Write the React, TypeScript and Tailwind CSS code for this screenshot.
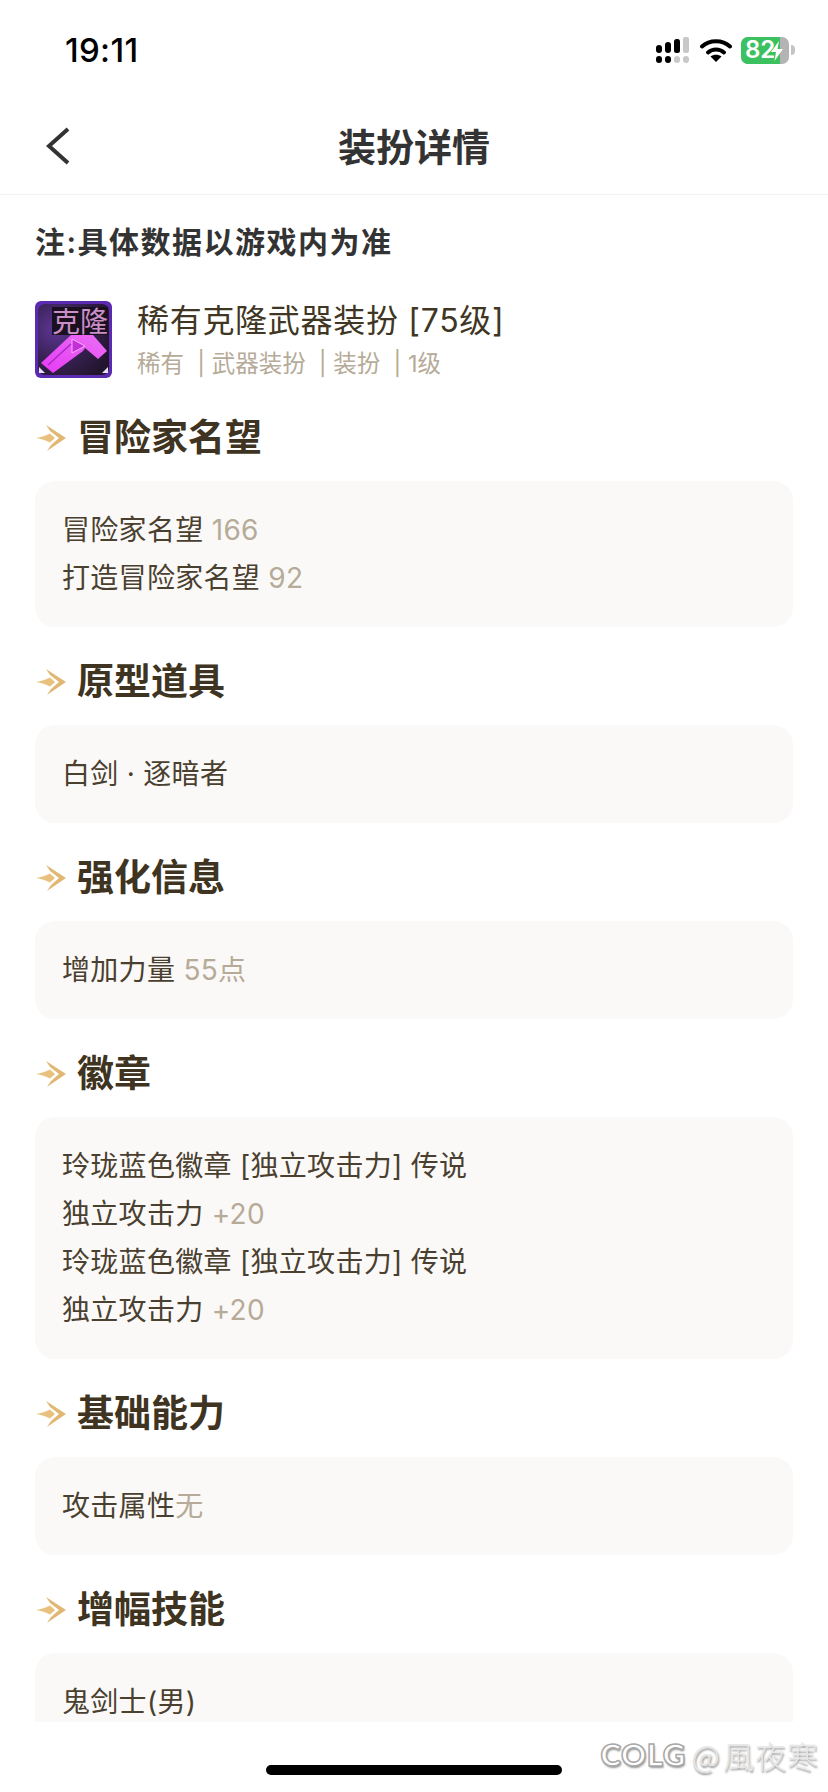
const SANS = "font-['Inter','Noto_Sans_CJK_SC',sans-serif]";

function SignalIcon() {
  return (
    <svg width="34" height="26" viewBox="0 0 34 26">
      <rect x="0" y="8" width="6" height="8" rx="3" fill="#000" />
      <rect x="9" y="5" width="6" height="11" rx="3" fill="#000" />
      <rect x="18" y="2" width="6" height="14" rx="2.5" fill="#000" />
      <rect x="27" y="0" width="6" height="16" rx="2" fill="#c8c8c8" />
      <rect x="0" y="19" width="6" height="7" rx="3" fill="#000" />
      <rect x="9" y="19" width="6" height="7" rx="3" fill="#000" />
      <rect x="18" y="19" width="6" height="7" rx="3" fill="#c8c8c8" />
      <rect x="27" y="19" width="6" height="7" rx="3" fill="#c8c8c8" />
    </svg>
  );
}

function WifiIcon() {
  return (
    <svg width="32" height="24" viewBox="0 0 32 24" fill="none">
      <path d="M2 8.5C9.5 1.5 22.5 1.5 30 8.5" stroke="#000" strokeWidth="4" strokeLinecap="round" />
      <path d="M8 14.5C12.5 10.5 19.5 10.5 24 14.5" stroke="#000" strokeWidth="4" strokeLinecap="round" />
      <path d="M16 24L10.5 18.5C13.5 16.3 18.5 16.3 21.5 18.5Z" fill="#000" />
    </svg>
  );
}

function BatteryIcon() {
  return (
    <div className="flex items-center">
      <div className="relative flex h-[27px] w-[48px] overflow-hidden rounded-[7px] bg-[#b4b4b4]">
        <div className="flex h-full w-[39px] items-center bg-[#3cc161] pl-[4px] text-[24px] leading-none font-semibold text-white">
          82
        </div>
        <svg className="absolute top-[4px] left-[30px]" width="12" height="20" viewBox="0 0 12 20">
          <path d="M8 0L0 11H5L3.500 20L12 8H6.500Z" fill="#fff" />
        </svg>
      </div>
      <div className="ml-[2px] h-[10px] w-[4px] rounded-r-full bg-[#c4c4c4]" />
    </div>
  );
}

function ItemIcon() {
  return (
    <svg width="77" height="77" viewBox="0 0 77 77" className="shrink-0">
      <defs>
        <radialGradient id="nebula" cx="0.25" cy="0.35" r="0.85">
          <stop offset="0" stopColor="#5d3796" />
          <stop offset="0.5" stopColor="#3a2257" />
          <stop offset="1" stopColor="#21142c" />
        </radialGradient>
        <linearGradient id="blade" x1="0" y1="1" x2="1" y2="0">
          <stop offset="0" stopColor="#e63af5" />
          <stop offset="1" stopColor="#ec6ef5" />
        </linearGradient>
      </defs>
      <rect width="77" height="77" rx="6" fill="#5a2bb0" />
      <rect x="3" y="3" width="71" height="71" rx="7" fill="url(#nebula)" />
      <rect x="17" y="6" width="56" height="28" fill="#1a1020" />
      <text x="17" y="31" fontSize="28" fontWeight="400" fill="#c98fc6" fontFamily="'Noto Sans CJK SC', sans-serif">
        克隆
      </text>
      <path d="M6 62L36 34L58 34L72 50L63 58L50 47L48 50L18 72Z" fill="url(#blade)" />
      <path d="M37 38L37 52L50 45Z" fill="#c22fd8" stroke="#f5b0f5" strokeWidth="1" />
      <path d="M13 64L36 43" stroke="#a92ac4" strokeWidth="1.500" />
      <path d="M4 72L10 72L4 66Z" fill="#e6e0f0" />
      <path d="M73 72L67 72L73 66Z" fill="#e6e0f0" />
    </svg>
  );
}

function SectionArrow() {
  return (
    <svg width="30" height="28" viewBox="0 0 30 28" className="shrink-0">
      <path d="M0 14C5 13 10 12 14 9.500L19 14L14 18.500C10 16 5 15 0 14Z" fill="#e8c27c" />
      <path d="M10 1L30 14L11 27L15 21L23 14L14 7Z" fill="#e0b873" />
    </svg>
  );
}

type Line = { label: string; value?: string };

const sections: { title: string; lines: Line[]; clipped?: boolean }[] = [
  {
    title: "冒险家名望",
    lines: [
      { label: "冒险家名望 ", value: "166" },
      { label: "打造冒险家名望 ", value: "92" },
    ],
  },
  { title: "原型道具", lines: [{ label: "白剑 · 逐暗者" }] },
  { title: "强化信息", lines: [{ label: "增加力量 ", value: "55点" }] },
  {
    title: "徽章",
    lines: [
      { label: "玲珑蓝色徽章 [独立攻击力] 传说" },
      { label: "独立攻击力 ", value: "+20" },
      { label: "玲珑蓝色徽章 [独立攻击力] 传说" },
      { label: "独立攻击力 ", value: "+20" },
    ],
  },
  { title: "基础能力", lines: [{ label: "攻击属性", value: "无" }] },
  { title: "增幅技能", lines: [{ label: "鬼剑士(男)" }], clipped: true },
];

export default function App() {
  return (
    <div className={`relative flex h-[1792px] w-[828px] flex-col overflow-hidden bg-white ${SANS}`}>
      {/* Status bar */}
      <div className="flex h-[100px] shrink-0 items-center justify-between pr-[33px] pl-[65px]">
        <span className="text-[33px] leading-none font-medium tracking-[0.3px] text-black">19:11</span>
        <div className="flex items-center">
          <SignalIcon />
          <div className="ml-[10px]">
            <WifiIcon />
          </div>
          <div className="ml-[9px]">
            <BatteryIcon />
          </div>
        </div>
      </div>

      {/* Header */}
      <div className="relative flex h-[95px] shrink-0 items-center justify-center border-b border-[#f3f3f3]">
        <svg className="absolute top-[27px] left-[44px]" width="28" height="38" viewBox="0 0 28 38" fill="none">
          <path d="M24 2L5 19L24 36" stroke="#333" strokeWidth="4" />
        </svg>
        <h1 className="text-[38px] leading-none font-bold text-[#333]">装扮详情</h1>
      </div>

      {/* Scrolling content */}
      <div className="h-[1527px] shrink-0 overflow-hidden px-[35px] pt-[25px]">
        <p className="text-[30px] leading-[44px] font-semibold tracking-[1.5px] text-[#333]">注:具体数据以游戏内为准</p>

        <div className="mt-[37px] flex h-[77px] items-center gap-[25px]">
          <ItemIcon />
          <div className="flex flex-col">
            <span className="text-[32px] leading-[40px] tracking-[0.7px] text-[#3f3624]">稀有克隆武器装扮 [75级]</span>
            <span className="mt-[8px] text-[23.5px] leading-[30px] text-[#b5ab98]">稀有&nbsp; | 武器装扮&nbsp; | 装扮&nbsp; | 1级</span>
          </div>
        </div>

        <div className="mt-[35px] flex flex-col gap-[30px]">
          {sections.map((section) => (
            <section key={section.title}>
              <div className="flex h-[50px] items-center gap-[11px] pl-[1px]">
                <SectionArrow />
                <h2 className="text-[37px] leading-[48px] font-bold text-[#3e3421]">{section.title}</h2>
              </div>
              <div
                className={`mt-[18px] rounded-[20px] bg-[#fbf9f7] px-[27px] py-[25px] ${section.clipped ? "min-h-[140px]" : ""}`}
              >
                {section.lines.map((line, i) => (
                  <p key={i} className="text-[28px] leading-[48px] tracking-[0.3px] text-[#4a4030]">
                    <span>{line.label}</span>
                    {line.value && <span className="text-[#b5ab98]">{line.value}</span>}
                  </p>
                ))}
              </div>
            </section>
          ))}
        </div>
      </div>

      {/* Home indicator */}
      <div className="flex flex-1 justify-center pt-[43px]">
        <div className="h-[10px] w-[296px] rounded-full bg-black" />
      </div>

      {/* Watermark */}
      <div className="absolute right-[9px] bottom-[22px] flex items-center font-['Noto_Sans_CJK_TC',sans-serif] text-white [text-shadow:1px_2px_2px_#9a9a9a]">
        <span className="font-['Lato',sans-serif] text-[31px] leading-none font-black tracking-[0.5px] [-webkit-text-stroke:1.5px_#a8a8a8]">COLG</span>
        <span className="ml-[6px] text-[30px] leading-none text-[#e4e4e4]">@</span>
        <span className="ml-[3px] text-[31px] leading-none font-light tracking-[1px] text-[#e8e8e8]">風夜寒</span>
      </div>
    </div>
  );
}
